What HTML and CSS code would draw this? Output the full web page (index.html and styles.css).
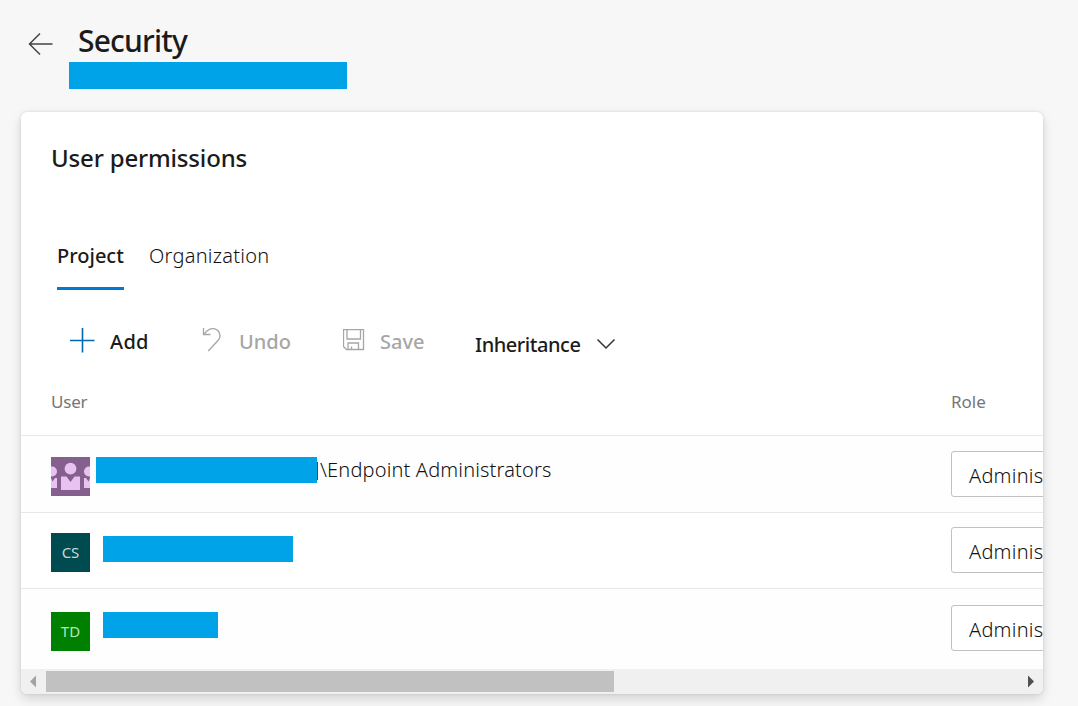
FILE: index.html
```html
<!DOCTYPE html>
<html lang="en">
<head>
<meta charset="utf-8">
<title>Security</title>
<link rel="stylesheet" href="styles.css">
</head>
<body>
<header class="page-header">
  <svg class="back" width="26" height="24" viewBox="0 0 26 24"><path d="M24.500 12H1.500M12 1.500L1.500 12l10.500 10.500"/></svg>
  <div class="heading">
    <h1>Security</h1>
    <div class="redacted subtitle"></div>
  </div>
</header>
<main class="card">
  <h2>User permissions</h2>
  <nav class="tabs">
    <span class="tab active">Project</span>
    <span class="tab light">Organization</span>
  </nav>
  <div class="toolbar">
    <svg class="icon-add" width="26" height="26" viewBox="0 0 26 26"><path d="M0 12.500h24.500M12.500 0v24.500"/></svg>
    <span class="cmd add">Add</span>
    <svg class="icon-undo" width="22" height="26" viewBox="0 0 22 26"><path d="M1.500 0v6.500h7M1.500 6.500L5 3C7 1.300 8.500.7 10.500.7c7 0 9.500 7.300 5.500 11.800L6.300 23"/></svg>
    <span class="cmd muted undo">Undo</span>
    <svg class="icon-save" width="22" height="22" viewBox="0 0 22 22"><path d="M.5.500h20v20H3.500l-3-3zM4 .5v9.500h13.500V.5M5 20.500v-6.500h10.500v6.500M8.500 20.500v-3"/></svg>
    <span class="cmd muted save">Save</span>
    <span class="cmd inherit">Inheritance</span>
    <svg class="icon-chevron" width="20" height="12" viewBox="0 0 20 12"><path d="M1.500 1.500L10 10l8.500-8.500"/></svg>
  </div>
  <section class="table">
    <div class="row head"><span class="col-user">User</span><span class="col-role">Role</span></div>
    <div class="row first">
      <svg class="avatar" width="39" height="39" viewBox="0 0 39 39">
        <rect width="39" height="39" fill="#855f8d"/>
        <g fill="#e8c3f1">
          <circle cx="19.500" cy="11.700" r="5.900"/><circle cx="1" cy="14.500" r="5"/><circle cx="38" cy="14.500" r="5"/>
          <path d="M10 19.500h5.500l4 5.500 4-5.500H29V33H10zM0 21l1.500 3.500L4 21h2v10H0zM39 21l-1.500 3.500L35 21h-2v10h6z"/>
        </g>
      </svg>
      <div class="redacted name-wide"></div>
      <span class="name light"><i class="cut"></i>\Endpoint Administrators</span>
      <div class="select light">Administrator</div>
    </div>
    <div class="row second">
      <div class="avatar teal">CS</div>
      <div class="redacted name-mid"></div>
      <div class="select light">Administrator</div>
    </div>
    <div class="row third">
      <div class="avatar green">TD</div>
      <div class="redacted name-short"></div>
      <div class="select light">Administrator</div>
    </div>
  </section>
  <div class="scrollbar">
    <svg class="arrow" width="25" height="25" viewBox="0 0 25 25"><path d="M9 12.500l6-6v12z" fill="#a3a3a3"/></svg>
    <div class="thumb"></div>
    <svg class="arrow" width="25" height="25" viewBox="0 0 25 25"><path d="M16 12.500l-6-6v12z" fill="#505050"/></svg>
  </div>
</main>
</body>
</html>
```
FILE: styles.css
```css
* { box-sizing: border-box; }
body {
  margin: 0;
  height: 706px;
  overflow: hidden;
  background: #f7f7f7;
  color: #1b1b1b;
  font-family: "Noto Sans", "Open Sans", sans-serif;
  font-size: 20px;
}
svg { display: block; flex: none; fill: none; }
h1, h2 { margin: 0; white-space: nowrap; }
.redacted { background: #00a2e8; flex: none; }
.light { font-weight: 300; color: #111; letter-spacing: 0.240px; }

.page-header { display: flex; height: 112px; padding-left: 28px; }
.back { margin-top: 32px; stroke: #444; stroke-width: 1.500; }
.heading { padding: 20px 0 0 15px; }
h1 { height: 42px; padding-left: 9px; font-size: 30px; line-height: 41px; font-weight: 500; letter-spacing: -0.800px; }
.subtitle { width: 278px; height: 27px; }

.card {
  width: 1022px;
  height: 582px;
  margin-left: 21px;
  background: #fff;
  border-radius: 6px;
  overflow: hidden;
  box-shadow: 0 5px 12px rgba(0, 0, 0, .14), 0 0 3px rgba(0, 0, 0, .12);
}
h2 { height: 124px; padding: 29px 0 0 30px; font-size: 24px; line-height: 34px; font-weight: 500; letter-spacing: -0.170px; }

.tabs { display: flex; gap: 25px; height: 54px; padding-left: 36px; line-height: 40px; }
.tab { height: 54px; white-space: nowrap; }
.tab.active { width: 67px; border-bottom: 3px solid #0078d4; font-weight: 500; }

.toolbar { display: flex; height: 87px; padding-left: 49px; font-weight: 500; }
.cmd { line-height: 30px; margin-top: 37px; white-space: nowrap; flex: none; }
.muted { color: #a6a6a6; }
.icon-add { margin-top: 38px; stroke: #0067b0; stroke-width: 1.600; }
.add { width: 105px; padding-left: 14px; letter-spacing: 0.300px; }
.icon-undo { margin-top: 38px; margin-left: 1px; stroke: #a6a6a6; stroke-width: 1.300; }
.undo { width: 118px; padding-left: 15px; }
.icon-save { margin-top: 39px; margin-left: 1px; stroke: #a6a6a6; stroke-width: 1.300; }
.save { width: 110px; padding-left: 15px; }
.inherit { width: 114px; margin-top: 40px; letter-spacing: -0.450px; }
.icon-chevron { margin-top: 48px; margin-left: 7px; stroke: #333; stroke-width: 1.500; }

.row { display: flex; padding-left: 30px; border-bottom: 1px solid #e8e8e8; background: #fefefe; }
.head { height: 59px; padding-top: 13px; background: #fff; font-size: 17px; line-height: 24px; color: #767676; }
.col-user { width: 900px; letter-spacing: -0.200px; }
.first { height: 77px; padding-top: 21px; }
.second { height: 76px; padding-top: 20px; background: #fff; }
.third { height: 80px; padding-top: 23px; border: 0; }
.avatar { width: 39px; height: 39px; flex: none; }
.teal, .green { color: #c3dadb; font-size: 15px; line-height: 38px; text-align: center; }
.teal { background: #004b50; }
.green { background: #008000; color: #b8e4b8; }
.name-wide { width: 221px; height: 26px; margin-left: 6px; }
.name-mid { width: 190px; height: 26px; margin: 3px 0 0 13px; }
.name-short { width: 115px; height: 26px; margin-left: 13px; }
.name { display: flex; height: 26px; line-height: 26px; white-space: nowrap; letter-spacing: 0.160px; }
.cut { width: 1px; height: 18px; margin: 5px 2px 0 0; background: #444; }
.select {
  width: 190px;
  height: 46px;
  flex: none;
  margin: -6px -98px 0 auto;
  padding-left: 17px;
  border: 1px solid #c1c1c1;
  border-radius: 3px;
  background: #fff;
  line-height: 47px;
}
.third .select { margin-top: -7px; }

.scrollbar { display: flex; justify-content: space-between; height: 25px; background: #f0f0f0; }
.thumb { width: 568px; height: 21px; margin: 2px auto 0 0; background: #c1c1c1; }
```
